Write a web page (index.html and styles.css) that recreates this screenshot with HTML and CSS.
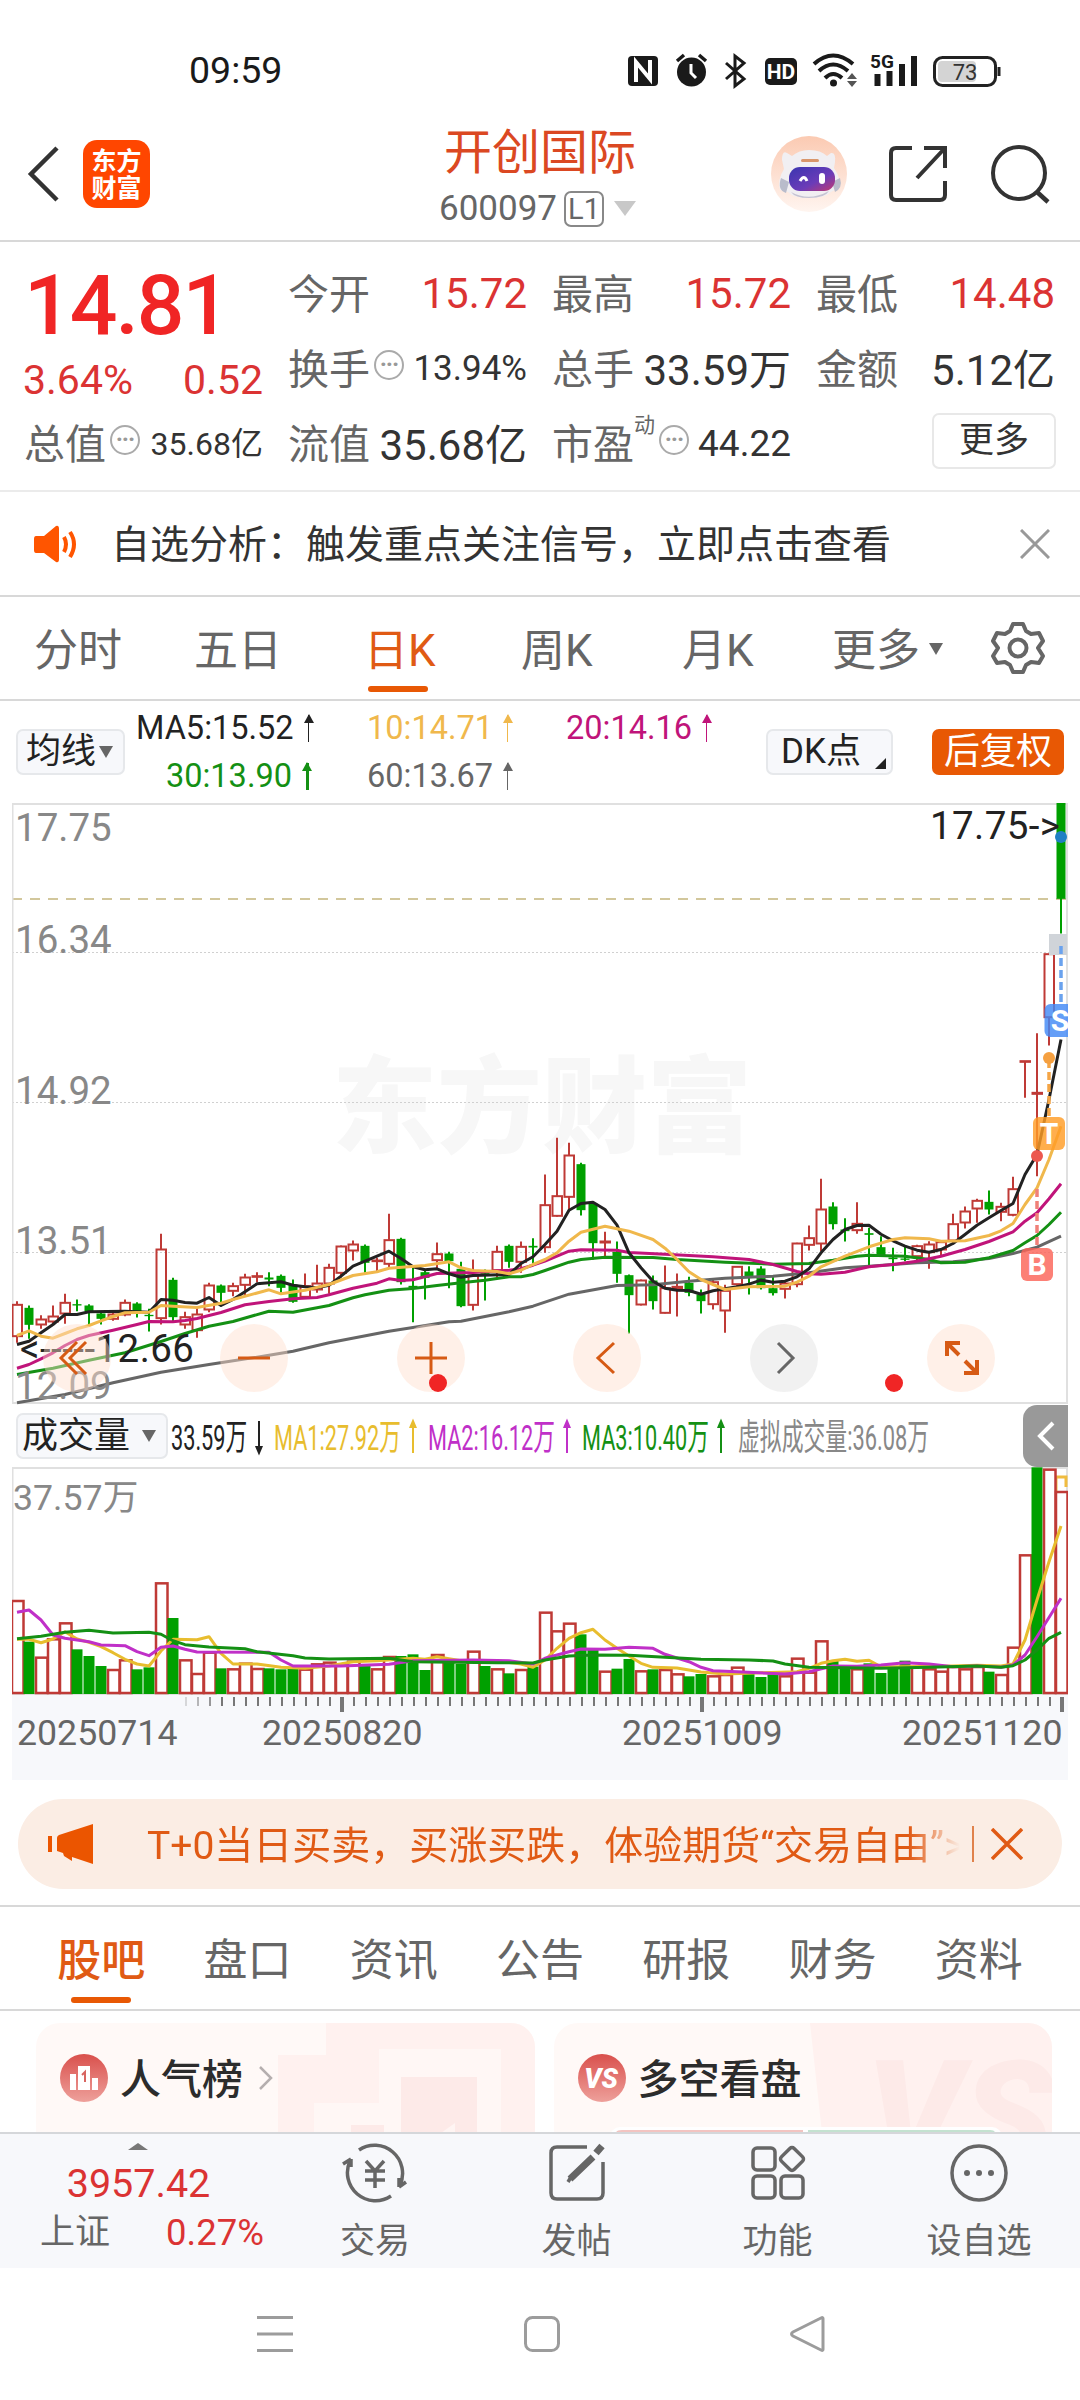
FILE: index.html
```html
<!DOCTYPE html>
<html lang="zh-CN">
<head>
    <meta charset="UTF-8">
    <meta name="viewport" content="width=device-width, initial-scale=1.0">
    <title>开创国际 600097</title>
    <link rel="stylesheet" href="styles.css">
</head>
<body>
    <!-- 状态栏 -->
    <div class="status-bar">
        <span class="status-time">09:59</span>
        <svg class="status-icons" width="374" height="52" viewBox="628 44 374 52">
            <rect x="628" y="56" width="30" height="30" rx="4" fill="#1a1a1a"/>
            <path d="M636 82V62L650 79V60" fill="none" stroke="#fff" stroke-width="4"/>
            <circle cx="691.500" cy="72" r="14.500" fill="#1a1a1a"/>
            <path d="M677 61L684 55M706 61L699 55" stroke="#1a1a1a" stroke-width="3.500"/>
            <path d="M691 64V73L696 78" fill="none" stroke="#fff" stroke-width="3"/>
            <path d="M726 63L744 79L735 86V56L744 63L726 79" fill="none" stroke="#1a1a1a" stroke-width="3"/>
            <rect x="765" y="58" width="32" height="27" rx="5" fill="#1a1a1a"/>
            <text x="781" y="79" class="hd-text">HD</text>
            <g fill="none" stroke="#1a1a1a" stroke-width="4">
                <path d="M814 64Q833 47 853 64"/>
                <path d="M819 71Q833 58 848 71"/>
                <path d="M825 78Q833 70 842 78"/>
            </g>
            <circle cx="833.500" cy="83" r="3.500" fill="#1a1a1a"/>
            <path d="M852 73L857 79H847zM852 87L857 81H847z" fill="#555"/>
            <text x="870" y="68" class="net-text">5G</text>
            <path d="M877.500 74V86M889.500 71V86M902 64V86M914 56V86" stroke="#1a1a1a" stroke-width="6"/>
            <rect x="934.500" y="57.500" width="61" height="28" rx="8" fill="#fff" stroke="#222" stroke-width="3"/>
            <rect x="938" y="61" width="38" height="21" rx="4" fill="#d4d4d4"/>
            <path d="M999 67V76" stroke="#222" stroke-width="3"/>
            <text x="965" y="80" class="battery-text">73</text>
        </svg>
    </div>

    <!-- 顶部标题 -->
    <div class="header">
        <div class="header-left">
            <svg width="34" height="58" viewBox="0 0 34 58"><path d="M31 3L5 29L31 55" fill="none" stroke="#333" stroke-width="4.500"/></svg>
            <div class="logo">东方<br>财富</div>
        </div>
        <div class="header-title">
            <div class="stock-name">开创国际</div>
            <div class="stock-code">600097<span class="level">L1</span><i class="tri"></i></div>
        </div>
        <div class="header-right">
            <svg width="76" height="76" viewBox="0 0 76 76">
                <defs>
                    <linearGradient id="halo" x1="0" y1="0" x2="0" y2="1"><stop offset="0" stop-color="#fbcab2"/><stop offset="1" stop-color="#fff5f0"/></linearGradient>
                    <linearGradient id="visor" x1="0" y1="0" x2="1" y2="1"><stop offset="0" stop-color="#3a35b0"/><stop offset=".6" stop-color="#6b3cb8"/><stop offset="1" stop-color="#c23a70"/></linearGradient>
                </defs>
                <circle cx="38" cy="38" r="38" fill="url(#halo)"/>
                <path d="M11 24Q11 14 16 17L21 20Q28 14 38 14Q50 14 56 20L60 17Q65 16 64 26L63 32Q71 44 68 52L60 56Q54 62 38 62Q22 62 17 56L9 54Q6 44 13 33z" fill="#f1eff2"/>
                <path d="M10 42Q6 54 15 57L18 46zM69 42Q72 52 64 56L61 46z" fill="#b9bccb"/>
                <path d="M20 56Q38 66 58 55Q54 62 38 62Q24 62 20 56z" fill="#c5c3d2"/>
                <rect x="18" y="31" width="46" height="24" rx="11" fill="url(#visor)"/>
                <path d="M29 45Q33 38 36 45" fill="none" stroke="#fff" stroke-width="3"/>
                <rect x="48" y="37" width="6" height="11" rx="3" fill="#fff"/>
                <rect x="30" y="23" width="18" height="3" rx="1.500" fill="#d9966b"/>
            </svg>
            <svg width="60" height="60" viewBox="0 0 60 60"><path d="M24 4H8Q3 4 3 9V51Q3 56 8 56H52Q57 56 57 51V37M36 4H57V24M57 4L29 34" fill="none" stroke="#333" stroke-width="4"/></svg>
            <svg width="62" height="62" viewBox="0 0 62 62"><circle cx="30" cy="30" r="26" fill="none" stroke="#333" stroke-width="4"/><path d="M48 49L59 59" stroke="#333" stroke-width="4.500"/></svg>
        </div>
    </div>

    <!-- 行情数据 -->
    <div class="quote">
        <div class="quote-main">
            <div class="price">14.81</div>
            <div class="change"><span>3.64%</span><span>0.52</span></div>
            <div class="cell"><label>总值</label><i class="more-dot">···</i><b class="small">35.68亿</b></div>
        </div>
        <div class="quote-grid">
            <div class="cell"><label>今开</label><b class="red">15.72</b></div>
            <div class="cell"><label>最高</label><b class="red">15.72</b></div>
            <div class="cell"><label>最低</label><b class="red">14.48</b></div>
            <div class="cell"><label>换手</label><i class="more-dot">···</i><b class="mid">13.94%</b></div>
            <div class="cell"><label>总手</label><b class="cn">33.59万</b></div>
            <div class="cell"><label>金额</label><b class="cn">5.12亿</b></div>
            <div class="cell"><label>流值</label><b class="cn">35.68亿</b></div>
            <div class="cell"><label>市盈</label><sup>动</sup><i class="more-dot">···</i><b class="pe">44.22</b></div>
            <div class="cell"><button class="btn-more">更多</button></div>
        </div>
    </div>

    <!-- 自选分析提示 -->
    <div class="alert">
        <svg width="46" height="38" viewBox="0 0 46 38">
            <path d="M2 11H10L22 1Q25 0 25 4V34Q25 38 22 37L10 28H2Q0 28 0 25V14Q0 11 2 11z" fill="#ff5500"/>
            <path d="M30 12Q34 19 30 27M36 7Q44 19 36 32" fill="none" stroke="#ff5500" stroke-width="4"/>
        </svg>
        <span class="alert-text">自选分析：触发重点关注信号，立即点击查看</span>
        <svg width="30" height="30" viewBox="0 0 30 30"><path d="M1 1L29 29M29 1L1 29" stroke="#999" stroke-width="3"/></svg>
    </div>

    <!-- 周期切换 -->
    <div class="period-tabs">
        <span class="p1">分时</span>
        <span class="p2">五日</span>
        <span class="p3 active">日K</span>
        <span class="p4">周K</span>
        <span class="p5">月K</span>
        <span class="p6">更多<i class="tri dark"></i></span>
        <svg width="54" height="54" viewBox="-27 -27 54 54" fill="none" stroke="#666" stroke-width="4" stroke-linejoin="round">
            <path d="M-5 -24H5L8 -17L13 -14L21 -15L25 -7L20 0L25 8L21 15L13 14L8 17L5 24H-5L-8 17L-13 14L-21 15L-25 8L-20 0L-25 -7L-21 -15L-13 -14L-8 -17z"/>
            <circle r="8.500"/>
        </svg>
    </div>

    <!-- 均线指标 -->
    <div class="ma-bar">
        <button class="pill ma-pill">均线<i class="tri dark"></i></button>
        <div class="ma-values">
            <span class="ma5">MA5:15.52<i class="arrow"></i></span>
            <span class="ma10">10:14.71<i class="arrow"></i></span>
            <span class="ma20">20:14.16<i class="arrow"></i></span>
            <span class="ma30">30:13.90<i class="arrow"></i></span>
            <span class="ma60">60:13.67<i class="arrow"></i></span>
        </div>
        <button class="pill dk-pill">DK点<i class="corner"></i></button>
        <button class="pill fq-pill">后复权</button>
    </div>

    <!-- K线图 -->
    <div class="chart">
        <svg id="kline" width="1056" height="613" viewBox="12 0 1056 613"></svg>
        <div class="chart-tools">
            <button class="tool"><svg viewBox="0 0 68 68"><path d="M34 18L18 34L34 50M43 18L27 34L43 50"/></svg></button>
            <button class="tool"><svg viewBox="0 0 68 68"><path d="M18 34H50"/></svg></button>
            <button class="tool"><svg viewBox="0 0 68 68"><path d="M18 34H50M34 18V50"/></svg></button>
            <button class="tool"><svg viewBox="0 0 68 68"><path d="M41 19L25 34L41 49"/></svg></button>
            <button class="tool gray"><svg viewBox="0 0 68 68"><path d="M28 19L43 34L28 49"/></svg></button>
            <button class="tool"><svg viewBox="0 0 68 68"><path d="M33 19H20V32M20 19L32 31M37 49H50V36M50 49L38 37" stroke-width="4"/></svg></button>
        </div>
        <i class="dot dot-left"></i>
        <i class="dot dot-right"></i>
    </div>

    <!-- 成交量指标 -->
    <div class="vol-bar">
        <button class="pill vol-pill">成交量<i class="tri dark"></i></button>
        <svg class="vol-values" width="760" height="62" viewBox="171 0 760 62">
            <text transform="translate(171 45) scale(.603 1)" fill="#222">33.59万</text>
            <text transform="translate(274 45) scale(.603 1)" fill="#e8bd2e">MA1:27.92万</text>
            <text transform="translate(428 45) scale(.603 1)" fill="#c030c8">MA2:16.12万</text>
            <text transform="translate(582 45) scale(.603 1)" fill="#149014">MA3:10.40万</text>
            <text transform="translate(738 45) scale(.607 1)" fill="#888">虚拟成交量:36.08万</text>
            <path d="M259 16V48M256.500 42L259 48L261.500 42z" stroke="#222" fill="#222" stroke-width="2"/>
            <path d="M413 48V16M410.500 22L413 16L415.500 22z" stroke="#e8bd2e" fill="#e8bd2e" stroke-width="2"/>
            <path d="M567 48V16M564.500 22L567 16L569.500 22z" stroke="#c030c8" fill="#c030c8" stroke-width="2"/>
            <path d="M721 48V16M718.500 22L721 16L723.500 22z" stroke="#149014" fill="#149014" stroke-width="2"/>
        </svg>
        <button class="collapse"><svg width="18" height="30" viewBox="0 0 18 30"><path d="M16 2L3 15L16 28" fill="none" stroke="#fff" stroke-width="4"/></svg></button>
    </div>

    <!-- 成交量图 -->
    <div class="volume">
        <svg id="volume" width="1056" height="313" viewBox="12 0 1056 313"></svg>
    </div>

    <!-- 推广条 -->
    <div class="banner">
        <svg width="46" height="40" viewBox="0 0 46 40" fill="#eb5500"><rect y="12" width="4" height="16"/><path d="M9 14Q9 12 11 11L45 0V40L24 33V37L16 32L15 29L9 27z"/></svg>
        <span class="banner-text">T+0当日买卖，买涨买跌，体验期货“交易自由”&gt;</span>
        <i class="banner-line"></i>
        <svg width="32" height="32" viewBox="0 0 32 32"><path d="M1 1L31 31M31 1L1 31" stroke="#e05a14" stroke-width="3.500"/></svg>
    </div>

    <!-- 内容切换 -->
    <div class="info-tabs">
        <span class="active">股吧</span>
        <span>盘口</span>
        <span>资讯</span>
        <span>公告</span>
        <span>研报</span>
        <span>财务</span>
        <span>资料</span>
    </div>

    <div class="cards">
        <div class="card">
            <svg class="card-bg" width="499" height="110" viewBox="0 0 499 110">
                <path d="M290 0H499V110H242V32H290z" fill="#fff1ef"/>
                <path d="M343 26H465V110H278V80H343z" fill="#fff7f5"/>
                <path d="M365 54H441V110H365zM315 102H348V110H315z" fill="#fdeae8"/>
                <path d="M405 110L419 100V110z" fill="#fff5f3"/>
            </svg>
            <div class="card-head">
                <svg width="48" height="48" viewBox="0 0 48 48">
                    <defs><linearGradient id="badge" x1="0" y1="0" x2="0" y2="1"><stop offset="0" stop-color="#d9504c"/><stop offset="1" stop-color="#eea09b"/></linearGradient></defs>
                    <circle cx="24" cy="24" r="24" fill="url(#badge)"/>
                    <path d="M10 20H16V36H10zM18 12H30V36H18zM32 24H38V36H32z" fill="#fff"/>
                    <path d="M22 21L25 18V28" fill="none" stroke="#d86560" stroke-width="2"/>
                </svg>
                <span>人气榜</span>
                <svg class="card-arrow" width="14" height="24" viewBox="0 0 14 24"><path d="M1 1L12 12L1 23" fill="none" stroke="#b5afaf" stroke-width="2.500"/></svg>
            </div>
        </div>
        <div class="card">
            <svg class="card-bg" width="499" height="160" viewBox="0 0 499 160">
                <path d="M256 0H499V110H268z" fill="#fff1ef"/>
                <text x="312" y="144" class="vs-bg">VS</text>
                <rect x="56" y="104" width="392" height="20" rx="10" fill="#fff"/>
                <path d="M62 110Q62 107 68 107H249V110z" fill="#f3c4c1"/>
                <path d="M254 107H436Q441 107 441 110H254z" fill="#c4e2d0"/>
            </svg>
            <div class="card-head">
                <svg width="48" height="48" viewBox="0 0 48 48"><circle cx="24" cy="24" r="24" fill="url(#badge)"/><text x="23" y="34" class="vs-text">VS</text></svg>
                <span>多空看盘</span>
            </div>
        </div>
    </div>

    <!-- 底部导航 -->
    <div class="bottom-nav">
        <div class="index-box">
            <i class="tri up"></i>
            <div class="index-value">3957.42</div>
            <div class="index-row"><span>上证</span><b>0.27%</b></div>
        </div>
        <div class="nav-item">
            <svg width="66" height="60" viewBox="-33 -30 66 60">
                <path d="M-16 -23A28 28 0 0 1 25 12M16 23A28 28 0 0 1 -25 -12M24 14L31 9M24 14V5M-24 -14L-32 -9M-24 -14V-6"/>
                <path d="M-9 -12L0 -2L9 -12M0 -2V15M-10 -2H10M-10 7H10"/>
            </svg>
            <span>交易</span>
        </div>
        <div class="nav-item">
            <svg width="60" height="60" viewBox="-30 -30 60 60">
                <path d="M10 -26H-20Q-26 -26 -26 -20V20Q-26 26 -20 26H20Q26 26 26 20V-11"/>
                <path d="M25 -27L19 -20M16 -16L-7 6" stroke-width="7"/><path d="M-6 4L-9 9"/>
            </svg>
            <span>发帖</span>
        </div>
        <div class="nav-item">
            <svg width="60" height="60" viewBox="-30 -30 60 60">
                <rect x="-25" y="-25" width="22" height="22" rx="4"/><rect x="-25" y="3" width="22" height="22" rx="4"/><rect x="3" y="3" width="22" height="22" rx="4"/>
                <rect x="5" y="-23" width="18" height="18" rx="3" transform="rotate(45 14 -14)"/>
            </svg>
            <span>功能</span>
        </div>
        <div class="nav-item">
            <svg width="60" height="60" viewBox="-30 -30 60 60"><circle r="27"/><g fill="#666" stroke="none"><circle cx="-12" r="3"/><circle r="3"/><circle cx="12" r="3"/></g></svg>
            <span>设自选</span>
        </div>
    </div>

    <!-- 系统导航键 -->
    <div class="sys-nav">
        <svg width="36" height="38" viewBox="0 0 36 38"><path d="M0 2.500H36M0 19H36M0 35.500H36"/></svg>
        <svg width="36" height="38" viewBox="0 0 36 38"><rect x="1.500" y="2.500" width="33" height="33" rx="7"/></svg>
        <svg width="36" height="38" viewBox="0 0 36 38"><path d="M33 3.500V34.500Q33 36 31 35L3 21Q0 19 3 17L31 3Q33 2 33 3.500z"/></svg>
    </div>

    <script src="chart.js"></script>
</body>
</html>
```

FILE: styles.css
```css
* {
    margin: 0;
    padding: 0;
    box-sizing: border-box;
}

body {
    width: 1080px;
    height: 2400px;
    overflow: hidden;
    background: #fff;
    color: #333;
    font-family: Roboto, "Noto Sans CJK SC", sans-serif;
}

i, b {
    font-style: normal;
    font-weight: normal;
}

svg {
    display: block;
    flex: none;
}

button {
    font-family: inherit;
    border: none;
    background: none;
    white-space: nowrap;
}

.tri {
    display: inline-block;
    border-left: 11px solid transparent;
    border-right: 11px solid transparent;
    border-top: 15px solid #c8c8c8;
}

.tri.dark {
    border-left-width: 7px;
    border-right-width: 7px;
    border-top: 12px solid #666;
}

.tri.up {
    border-left-width: 10px;
    border-right-width: 10px;
    border-top: none;
    border-bottom: 7px solid #777;
}

/* 状态栏 */
.status-bar {
    height: 108px;
    padding: 32px 78px 0 189px;
    display: flex;
    align-items: center;
    justify-content: space-between;
}

.status-time {
    font-size: 37.500px;
    color: #1a1a1a;
}

.hd-text {
    font: bold 21px Roboto, sans-serif;
    fill: #fff;
    text-anchor: middle;
}

.net-text {
    font: bold 19px Roboto, sans-serif;
    fill: #1a1a1a;
}

.battery-text {
    font: 22px Roboto, sans-serif;
    fill: #333;
    text-anchor: middle;
}

/* 标题 */
.header {
    height: 134px;
    border-bottom: 2px solid #d8d8d8;
    display: grid;
    grid-template-columns: 380px 320px 380px;
}

.header-left {
    display: flex;
    align-items: center;
    gap: 23px;
    padding-left: 26px;
}

.logo {
    width: 67px;
    height: 68px;
    padding-top: 8px;
    border-radius: 14px;
    background: #ff4600;
    color: #fff;
    font-size: 25px;
    font-weight: bold;
    line-height: 27px;
    text-align: center;
}

.header-title {
    text-align: center;
}

.stock-name {
    margin-top: 18px;
    height: 54px;
    font-size: 48px;
    line-height: 54px;
    color: #db4822;
}

.stock-code {
    display: flex;
    align-items: center;
    justify-content: center;
    height: 57px;
    margin-right: 5px;
    font-size: 35px;
    color: #666;
}

.level {
    width: 40px;
    height: 36px;
    margin: 0 10px 0 7px;
    border: 2px solid #888;
    border-radius: 7px;
    font-size: 29px;
    line-height: 33px;
}

.header-right {
    display: flex;
    align-items: center;
    justify-content: flex-end;
    gap: 41px;
    padding-right: 29px;
}

/* 行情 */
.quote {
    height: 250px;
    padding: 14px 24px 0 25px;
    border-bottom: 2px solid #ebebeb;
    display: flex;
    gap: 26px;
}

.quote-main {
    width: 238px;
}

.price {
    height: 94px;
    margin-left: -1px;
    padding-top: 3px;
    font-size: 84px;
    line-height: 94px;
    font-weight: 500;
    letter-spacing: -2px;
    color: #f02525;
}

.change {
    display: flex;
    justify-content: space-between;
    height: 56px;
    margin: 0 0 0 -2px;
    font-size: 41px;
    line-height: 61px;
    color: #db3333;
}

.quote-grid {
    flex: 1;
    display: grid;
    grid-template-columns: 238px 238px 238px;
    grid-auto-rows: 75px;
    column-gap: 26px;
}

.cell {
    display: flex;
    align-items: center;
    height: 75px;
    font-size: 42px;
    white-space: nowrap;
}

.cell label {
    margin: 0 0 5px -1px;
    color: #666;
    font-size: 41px;
}

.cell b {
    margin-left: auto;
}

.cell .red {
    color: #db3333;
}

.cell .small {
    margin-bottom: 5px;
    font-size: 32px;
}

.cell .cn {
    margin-bottom: 5px;
}

.cell .mid {
    font-size: 35px;
}

.cell .pe {
    font-size: 37px;
}

.cell sup {
    align-self: flex-start;
    margin-top: 7px;
    font-size: 21px;
    line-height: 24px;
    color: #666;
}

.more-dot {
    width: 30px;
    height: 30px;
    margin: -8px 0 0 4px;
    border: 2px solid #aaa;
    border-radius: 50%;
    color: #999;
    font-size: 24px;
    font-weight: bold;
    line-height: 25px;
    text-align: center;
    letter-spacing: -1px;
}

.btn-more {
    width: 124px;
    height: 56px;
    margin: 0 -1px 5px auto;
    border: 2px solid #e8e8e8;
    border-radius: 7px;
    font-size: 35px;
    line-height: 48px;
    color: #333;
}

/* 提示 */
.alert {
    height: 105px;
    padding: 0 30px 0 34px;
    border-bottom: 2px solid #d8d8d8;
    display: flex;
    align-items: center;
}

.alert-text {
    flex: 1;
    padding: 0 0 5px 31px;
    font-size: 39px;
}

/* 周期 */
.period-tabs {
    height: 104px;
    padding: 0 35px 0 34px;
    border-bottom: 2px solid #d8d8d8;
    display: flex;
    align-items: center;
    font-size: 44px;
    color: #666;
}

.period-tabs span {
    position: relative;
    height: 102px;
    line-height: 108px;
    white-space: nowrap;
}

.period-tabs .p1 { width: 160px; }
.period-tabs .p2 { width: 170px; }
.period-tabs .p3 { width: 157px; }
.period-tabs .p4 { width: 161px; }
.period-tabs .p5 { width: 150px; }
.period-tabs .p6 { width: 159px; }

.period-tabs .tri {
    margin: 0 0 11px 9px;
}

.active {
    color: #e05a14;
}

.period-tabs .active::after,
.info-tabs .active::after {
    content: "";
    position: absolute;
    left: 4px;
    bottom: 7px;
    width: 60px;
    height: 6px;
    border-radius: 3px;
    background: #e85804;
}

/* 均线 */
.ma-bar {
    height: 102px;
    padding-left: 16px;
    display: flex;
    align-items: center;
}

.pill {
    flex: none;
    height: 46px;
    border: 2px solid #e6e8eb;
    border-radius: 7px;
    background: #f7f8fb;
    color: #222;
    font-size: 36px;
    line-height: 40px;
    display: flex;
    align-items: center;
}

.ma-pill {
    width: 109px;
    padding-left: 8px;
    font-size: 35px;
}

.ma-pill .tri {
    margin-left: 3px;
}

.ma-values {
    flex: none;
    width: 641px;
    padding-left: 11px;
    display: grid;
    grid-template-columns: 179px 52px 147px 52px 147px;
    grid-template-rows: 48px 48px;
    font-size: 32.500px;
    line-height: 48px;
}

.ma-values span {
    display: flex;
    align-items: center;
    justify-content: flex-end;
    white-space: nowrap;
}

.ma-values .ma10,
.ma-values .ma60 {
    grid-column: 3;
}

.ma-values .ma20 {
    grid-column: 5;
}

.ma-values .ma30 {
    grid-column: 1;
}

.ma-values .ma30,
.ma-values .ma60 {
    grid-row: 2;
}

.ma5 { color: #222; }
.ma10 { color: #f0b84c; }
.ma20 { color: #c0147a; }
.ma30 { color: #149014; }
.ma60 { color: #666; }

.arrow {
    position: relative;
    width: 3px;
    height: 27px;
    margin: 0 6px 0 14px;
    background: currentColor;
}

.arrow::before {
    content: "";
    position: absolute;
    left: -4px;
    top: -1px;
    border-left: 5.500px solid transparent;
    border-right: 5.500px solid transparent;
    border-bottom: 9px solid currentColor;
}

.dk-pill {
    position: relative;
    width: 127px;
    padding-left: 13px;
    font-size: 35px;
}

.corner {
    position: absolute;
    right: 5px;
    bottom: 4px;
    border-left: 11px solid transparent;
    border-bottom: 11px solid #222;
}

.fq-pill {
    width: 132px;
    margin-left: 39px;
    padding-left: 12px;
    border: none;
    background: #e85804;
    color: #fff;
}

/* K线图 */
.chart {
    position: relative;
    height: 602px;
    margin: 0 12px;
}

.chart text {
    font-family: Roboto, "Noto Sans CJK SC", sans-serif;
    font-size: 38.500px;
}

.chart .watermark {
    font-family: "Noto Sans CJK SC", sans-serif;
    font-size: 105px;
    font-weight: 900;
    fill: #f7f7f7;
}

.chart .mark-text {
    font-size: 30px;
    font-weight: bold;
    fill: #fff;
    text-anchor: middle;
}

.chart-tools {
    position: absolute;
    left: 31px;
    right: 73px;
    top: 521px;
    display: flex;
    justify-content: space-between;
}

.tool {
    width: 68px;
    height: 68px;
    border-radius: 50%;
    background: rgba(255, 222, 204, .45);
}

.tool svg {
    fill: none;
    stroke: #d65a14;
    stroke-width: 3;
}

.tool.gray {
    background: rgba(228, 228, 228, .5);
}

.tool.gray svg {
    stroke: #666;
}

.dot {
    position: absolute;
    top: 571px;
    width: 18px;
    height: 18px;
    border-radius: 50%;
    background: #f02525;
}

.dot-left {
    left: 417px;
}

.dot-right {
    left: 873px;
}

/* 成交量 */
.vol-bar {
    height: 62px;
    padding: 0 12px 0 16px;
    display: flex;
    align-items: center;
}

.vol-pill {
    width: 152px;
    padding-left: 4px;
}

.vol-pill .tri {
    margin-left: 12px;
}

.vol-values {
    margin-left: 3px;
    font-size: 36px;
}

.collapse {
    width: 45px;
    height: 62px;
    margin-left: auto;
    padding-left: 14px;
    border-radius: 14px 0 0 14px;
    background: #999;
}

.volume {
    height: 313px;
    margin: 0 12px;
    font-size: 35.700px;
}

/* 推广条 */
.banner {
    height: 90px;
    margin: 19px 18px 16px;
    padding: 0 39px 0 30px;
    border-radius: 45px;
    background: #fbede4;
    color: #e05a14;
    display: flex;
    align-items: center;
}

.banner-text {
    flex: none;
    width: 866px;
    padding: 0 0 5px 53px;
    overflow: hidden;
    font-size: 39px;
    white-space: nowrap;
    -webkit-mask-image: linear-gradient(to right, #000 815px, transparent 866px);
    mask-image: linear-gradient(to right, #000 815px, transparent 866px);
}

.banner-line {
    width: 2px;
    height: 36px;
    margin: 0 17px 0 auto;
    background: #e0824c;
}

/* 内容切换 */
.info-tabs {
    height: 106px;
    padding: 0 28px;
    border-top: 2px solid #d8d8d8;
    border-bottom: 2px solid #d8d8d8;
    display: grid;
    grid-template-columns: repeat(7, 1fr);
    font-size: 44px;
    line-height: 108px;
    text-align: center;
    color: #666;
}

.info-tabs span {
    position: relative;
}

.info-tabs .active {
    color: #e05a14;
    font-weight: 500;
}

.info-tabs .active::after {
    left: 43px;
    bottom: 12px;
}

.cards {
    height: 121px;
    padding: 12px 28px 0 36px;
    overflow: hidden;
    display: flex;
    gap: 19px;
}

.card {
    position: relative;
    width: 499px;
    height: 160px;
    border-radius: 24px;
    overflow: hidden;
    background: #fff9f7;
}

.card-bg {
    position: absolute;
    left: 0;
    top: 0;
}

.card-head {
    position: relative;
    display: flex;
    align-items: center;
    height: 109px;
    padding-left: 24px;
    font-size: 41px;
    font-weight: 500;
    color: #2c2c2c;
}

.card-head span {
    margin: 0 0 4px 12px;
}

.card-arrow {
    margin-left: 16px;
}

.vs-bg {
    font: italic 900 150px Roboto, sans-serif;
    fill: #fdeae8;
}

.vs-text {
    font: italic 900 27px Roboto, sans-serif;
    fill: #fff;
    text-anchor: middle;
}

/* 底部导航 */
.bottom-nav {
    height: 136px;
    border-top: 2px solid #d5d7da;
    background: #f7f8fb;
    display: grid;
    grid-template-columns: 274px 202px 201px 201px 202px;
}

.index-box {
    padding-top: 9px;
    text-align: center;
}

.index-box .tri {
    display: block;
    width: 20px;
    margin-left: 128px;
}

.index-value {
    height: 68px;
    padding-left: 3px;
    font-size: 39.500px;
    line-height: 68px;
    color: #db3333;
}

.index-row {
    display: flex;
    justify-content: space-between;
    margin-top: -9px;
    padding: 0 10px 0 40px;
    font-size: 35px;
    line-height: 48px;
    color: #666;
}

.index-row b {
    color: #db3333;
    font-size: 36.500px;
}

.nav-item {
    padding-top: 9px;
    display: flex;
    flex-direction: column;
    align-items: center;
    font-size: 35px;
    line-height: 50px;
    color: #666;
}

.nav-item svg {
    margin-bottom: 14px;
    fill: none;
    stroke: #666;
    stroke-width: 3.500;
}

/* 系统键 */
.sys-nav {
    height: 132px;
    padding: 0 254px 0 257px;
    display: flex;
    align-items: center;
    justify-content: space-between;
}

.sys-nav svg {
    fill: none;
    stroke: #9c9c9c;
    stroke-width: 3;
}
```

FILE: chart.js
```javascript
// K线: [涨跌, 最高, 实体上沿, 实体下沿, 最低], 单位为 1/3 像素
const candles = [
    ['R', 725, 736, 830, 850], ['G', 738, 745, 796, 838], ['R', 767, 780, 795, 808], ['R', 738, 771, 786, 795],
    ['R', 703, 730, 762, 793], ['G', 720, 734, 738, 755], ['G', 734, 738, 755, 796], ['G', 755, 762, 778, 795],
    ['R', 760, 765, 778, 784], ['R', 720, 730, 765, 770], ['G', 728, 732, 760, 774], ['G', 748, 766, 770, 816],
    ['R', 523, 570, 776, 795], ['G', 655, 661, 773, 785], ['R', 757, 773, 795, 808], ['R', 745, 765, 812, 835],
    ['R', 670, 678, 750, 758], ['G', 675, 678, 700, 740], ['R', 670, 680, 694, 710], ['R', 643, 654, 676, 710],
    ['R', 638, 650, 652, 668], ['G', 638, 654, 660, 680], ['G', 645, 649, 685, 700], ['G', 660, 675, 727, 730],
    ['R', 642, 680, 712, 715], ['R', 616, 672, 690, 700], ['R', 613, 625, 672, 703], ['R', 558, 561, 640, 650],
    ['R', 543, 555, 573, 603], ['G', 555, 559, 610, 640], ['R', 595, 603, 605, 635], ['R', 463, 542, 613, 628],
    ['G', 535, 538, 668, 675], ['G', 625, 679, 685, 788], ['G', 630, 638, 655, 720], ['R', 549, 584, 602, 630],
    ['G', 577, 582, 605, 686], ['G', 607, 628, 740, 743], ['R', 600, 648, 736, 753], ['G', 630, 639, 643, 723],
    ['R', 559, 577, 632, 655], ['G', 555, 559, 607, 625], ['R', 546, 562, 607, 640], ['G', 536, 559, 564, 612],
    ['R', 345, 437, 563, 580], ['R', 235, 410, 469, 472], ['R', 250, 288, 412, 455], ['G', 310, 314, 452, 468],
    ['G', 425, 432, 551, 600], ['R', 517, 546, 549, 590], ['G', 546, 577, 643, 670], ['G', 645, 647, 707, 822],
    ['R', 660, 663, 735, 738], ['G', 648, 663, 725, 750], ['R', 618, 686, 760, 762], ['R', 642, 682, 686, 771],
    ['G', 652, 670, 700, 710], ['G', 690, 705, 725, 762], ['R', 656, 668, 734, 750], ['R', 676, 694, 753, 820],
    ['R', 620, 622, 674, 680], ['G', 620, 636, 650, 705], ['G', 620, 627, 686, 690], ['G', 652, 686, 701, 708],
    ['R', 665, 672, 688, 717], ['R', 550, 552, 674, 683], ['R', 498, 536, 556, 573], ['R', 358, 450, 552, 575],
    ['G', 428, 441, 494, 510], ['G', 476, 510, 515, 546], ['R', 428, 493, 512, 523], ['G', 505, 521, 526, 617],
    ['G', 530, 563, 590, 592], ['G', 565, 594, 599, 635], ['G', 560, 597, 601, 605], ['R', 556, 560, 590, 605],
    ['R', 545, 555, 578, 628], ['R', 545, 548, 570, 590], ['R', 463, 494, 543, 555], ['R', 441, 456, 489, 507],
    ['R', 418, 424, 447, 490], ['G', 393, 427, 450, 465], ['R', 430, 442, 457, 485], ['R', 352, 389, 466, 470],
    ['R', 5, 5, 7, 115], ['R', -79, 100, 103, 350], ['R', -316, -316, -127, -42], ['G', -771, -771, -482, -378]
];

// 均线: [第几根, 位置]
const maLines = {
    '#666666': [[0,1030],[4,1005],[8,970],[12,938],[16,915],[20,893],[23,875],[26,850],[31,815],[33,804],[36,787],[37,785],[41,757],[43,740],[46,704],[50,678],[53,676],[56,665],[59,656],[63,650],[66,640],[69,625],[71,620],[75,610],[78,607],[81,597],[83,582],[85,563],[87,530]],
    '#149014': [[0,945],[3,926],[6,902],[9,880],[12,846],[14,822],[16,800],[18,786],[21,755],[23,758],[25,745],[26,738],[28,715],[29,706],[31,692],[33,687],[35,678],[37,670],[39,662],[41,652],[42,652],[43,645],[44,633],[46,608],[47,600],[49,593],[53,594],[55,600],[59,608],[63,614],[66,612],[68,602],[70,590],[71,587],[74,590],[76,600],[77,610],[79,608],[81,595],[83,573],[84,550],[85,528],[86,495],[87,458]],
    '#c0147a': [[0,926],[1,915],[2,898],[3,880],[4,858],[5,840],[6,828],[8,812],[10,795],[11,786],[13,787],[14,783],[15,777],[17,759],[19,736],[21,726],[23,718],[25,714],[26,706],[28,686],[30,671],[31,658],[32,663],[33,661],[35,642],[38,639],[41,632],[42,628],[43,617],[44,605],[46,575],[47,571],[50,572],[51,579],[54,584],[58,592],[61,600],[63,615],[65,636],[66,643],[67,644],[69,638],[71,622],[73,615],[75,605],[77,590],[79,570],[81,546],[83,517],[84,485],[85,460],[86,418],[87,373]],
    '#222222': [[0,855],[1,845],[2,820],[3,795],[4,765],[5,765],[6,757],[9,755],[11,758],[12,720],[13,722],[14,729],[15,731],[16,714],[17,738],[18,720],[19,697],[20,673],[21,670],[22,667],[23,677],[24,682],[25,685],[26,677],[27,650],[28,620],[29,605],[30,590],[31,575],[32,597],[33,622],[34,631],[35,628],[36,643],[37,653],[38,648],[41,645],[42,612],[43,592],[44,555],[45,515],[46,452],[47,432],[48,428],[49,450],[50,497],[51,580],[52,625],[53,665],[54,686],[55,692],[56,693],[57,704],[58,694],[59,688],[60,682],[61,674],[62,662],[63,668],[64,665],[65,652],[66,628],[67,580],[68,540],[69,510],[70,498],[71,497],[72,524],[73,544],[74,560],[75,572],[76,578],[77,570],[78,552],[79,525],[80,497],[81,475],[82,453],[83,432],[84,345],[85,285],[86,120],[87,-60]],
    '#f0b84c': [[0,828],[1,814],[2,830],[3,836],[4,822],[5,808],[6,798],[7,784],[8,771],[9,760],[11,758],[12,738],[13,740],[15,744],[17,731],[18,720],[21,691],[22,703],[24,692],[26,675],[28,648],[30,637],[31,626],[34,618],[36,607],[37,625],[38,633],[40,636],[41,643],[42,632],[43,615],[44,600],[45,580],[46,545],[47,518],[49,500],[51,515],[53,540],[54,566],[55,600],[56,637],[57,660],[59,690],[61,682],[64,680],[65,668],[66,650],[67,622],[69,590],[71,562],[73,540],[74,535],[76,538],[77,545],[79,544],[81,528],[82,514],[83,492],[84,435],[85,385],[86,300],[87,200]]
};

// 成交量柱顶
const volumes = [
    630, 755, 800, 745, 697, 778, 798, 828, 837, 808, 838, 832, 577, 684, 808, 849, 785, 835, 835, 818, 834, 835,
    838, 836, 836, 820, 815, 822, 812, 825, 835, 798, 798, 793, 840, 792, 812, 822, 782, 828, 835, 850, 837, 830,
    665, 721, 698, 733, 780, 842, 836, 807, 841, 838, 837, 850, 859, 852, 856, 852, 830, 852, 861, 853, 856, 803,
    845, 751, 810, 830, 835, 820, 849, 833, 812, 828, 835, 842, 828, 835, 828, 845, 852, 770, 493, 232, 236, 303
];
// 与当日K线颜色不同的量柱
const volumeColor = { 85: 'G', 87: 'R' };

const volLines = {
    '#e8bd2e': [[0,748],[1,748],[2,758],[3,747],[4,725],[5,747],[6,757],[7,770],[8,788],[9,808],[10,822],[11,828],[12,783],[13,748],[15,749],[16,740],[17,790],[18,822],[20,822],[22,832],[24,835],[26,828],[28,815],[30,812],[33,805],[34,808],[35,800],[37,812],[40,812],[42,822],[43,832],[44,810],[45,775],[46,745],[47,728],[48,718],[49,750],[50,775],[51,798],[52,820],[53,832],[55,834],[57,846],[59,852],[62,848],[65,845],[66,835],[67,820],[68,812],[69,808],[70,814],[71,811],[72,830],[74,830],[78,828],[80,826],[82,828],[83,822],[84,750],[85,630],[86,515],[87,408]],
    '#c030c8': [[0,667],[1,660],[2,690],[3,735],[4,745],[6,755],[7,765],[9,767],[10,785],[11,797],[12,772],[13,768],[14,778],[15,786],[21,787],[22,810],[23,828],[27,828],[31,823],[33,812],[38,810],[41,812],[43,822],[44,805],[46,785],[47,777],[49,778],[51,772],[53,775],[54,793],[56,815],[57,832],[58,842],[60,845],[64,852],[66,845],[68,828],[70,829],[72,825],[74,818],[76,822],[78,830],[80,828],[82,832],[83,825],[84,795],[85,740],[87,625]],
    '#149014': [[0,746],[2,739],[4,727],[6,721],[8,729],[11,727],[12,733],[13,752],[14,764],[16,771],[19,776],[20,785],[23,797],[24,804],[26,807],[31,805],[33,815],[40,818],[43,819],[44,810],[46,798],[48,795],[51,796],[54,802],[57,808],[61,810],[63,813],[64,822],[66,832],[72,835],[76,832],[80,828],[82,832],[83,827],[84,810],[85,780],[86,745],[87,727]]
};

const RED = '#bf3a36';
const GREEN = '#00a000';
const px = i => 17 + 12 * i;
const priceY = v => 256.5 + v / 3;
const volY = v => v / 3 - 77;

function polyline(points, color, toY) {
    const list = points.map(p => px(p[0]) + ',' + toY(p[1]).toFixed(1)).join(' ');
    return `<polyline points="${list}" fill="none" stroke="${color}" stroke-width="3" stroke-linejoin="round"/>`;
}

function drawKline() {
    let s = '<text class="watermark" x="332" y="341">东方财富</text>';
    [150, 300, 450].forEach(y => {
        s += `<path d="M12 ${y - 0.5}H1068" stroke="#d0d0d0" stroke-width="1" stroke-dasharray="2 2"/>`;
    });
    s += '<path d="M12 96H1067" stroke="#c3b57c" stroke-width="1.500" stroke-dasharray="10 8"/>';
    s += '<path d="M12 1H1067V600H12.500V1" fill="none" stroke="#e0e0e0" stroke-width="2"/>';

    candles.forEach((c, i) => {
        const x = px(i);
        const [hi, top, bottom, lo] = c.slice(1).map(priceY);
        if (c[0] === 'G') {
            s += `<path d="M${x} ${hi}V${lo}" stroke="${GREEN}" stroke-width="2"/>`;
            s += `<rect x="${x - 4.5}" y="${top}" width="9" height="${bottom - top}" fill="${GREEN}"/>`;
        } else {
            s += `<path d="M${x} ${hi}V${top}M${x} ${bottom}V${lo}" stroke="${RED}" stroke-width="2"/>`;
            s += `<rect x="${x - 4.5}" y="${top}" width="9.500" height="${bottom - top}" fill="none" stroke="${RED}" stroke-width="2"/>`;
        }
    });
    Object.keys(maLines).forEach(color => {
        s += polyline(maLines[color], color, priceY);
    });

    s += '<g fill="#888"><text x="15" y="38">17.75</text><text x="15" y="150">16.34</text>';
    s += '<text x="15" y="301">14.92</text><text x="15" y="451">13.51</text><text x="15" y="596">12.09</text></g>';
    s += '<g fill="#222"><text x="20" y="559" textLength="174">&lt;-----12.66</text><text x="930" y="36" textLength="130">17.75-&gt;</text></g>';

    // 买卖点标记
    s += '<rect x="1049" y="131" width="18" height="21" fill="#d0d4d9"/>';
    s += '<g fill="none" stroke-width="3.500" stroke-dasharray="8 4">';
    s += '<path d="M1061 143V200" stroke="#6aa2ee"/><path d="M1049 257V314" stroke="#f5a545"/><path d="M1037 386V445" stroke="#f08078"/></g>';
    s += '<circle cx="1061" cy="34" r="6" fill="#1f7fc4"/><circle cx="1049" cy="255" r="6" fill="#f5a040"/><circle cx="1037" cy="353" r="6" fill="#ec5850"/>';
    s += '<g fill-opacity=".82"><rect x="1044.500" y="201" width="33" height="33" rx="6" fill="#4289f5"/>';
    s += '<rect x="1033" y="314" width="32" height="33" rx="6" fill="#ff9c26"/>';
    s += '<rect x="1021" y="445" width="32" height="33" rx="6" fill="#fb6458"/></g>';
    s += '<text class="mark-text" x="1060" y="228">S</text><text class="mark-text" x="1049" y="341">T</text><text class="mark-text" x="1037" y="472">B</text>';
    document.getElementById('kline').innerHTML = s;
}

function drawVolume() {
    let s = '<rect x="12" y="227" width="1056" height="86" fill="#f7f8fb"/>';
    s += '<path d="M12 1H1067V227H12.500V1" fill="none" stroke="#e0e0e0" stroke-width="2"/>';
    s += '<path d="M1056 30V10H1066V20" fill="none" stroke="#f0bc40" stroke-width="3"/>';
    volumes.forEach((v, i) => {
        const x = px(i);
        const y = volY(v);
        if ((volumeColor[i] || candles[i][0]) === 'G') {
            s += `<rect x="${x - 5.5}" y="${y}" width="11" height="${227 - y}" fill="${GREEN}"/>`;
        } else {
            s += `<rect x="${x - 5}" y="${y + 1}" width="11.500" height="${225 - y}" fill="#fff" stroke="${RED}" stroke-width="2.500"/>`;
        }
    });
    Object.keys(volLines).forEach(color => {
        s += polyline(volLines[color], color, volY);
    });
    for (let i = 14; i < 88; i++) {
        const major = i === 27 || i === 57 || i === 87;
        const opacity = Math.min(1, (i - 13) / 4);
        s += `<path d="M${px(i) + 1} 230V${major ? 245 : 239}" stroke="#777" stroke-width="${major ? 4 : 2}" opacity="${opacity}"/>`;
    }
    s += '<text x="13" y="43" fill="#888">37.57万</text>';
    s += '<g fill="#666"><text x="17" y="278">20250714</text><text x="262" y="278">20250820</text>';
    s += '<text x="622" y="278">20251009</text><text x="902" y="278">20251120</text></g>';
    document.getElementById('volume').innerHTML = s;
}

drawKline();
drawVolume();
```
